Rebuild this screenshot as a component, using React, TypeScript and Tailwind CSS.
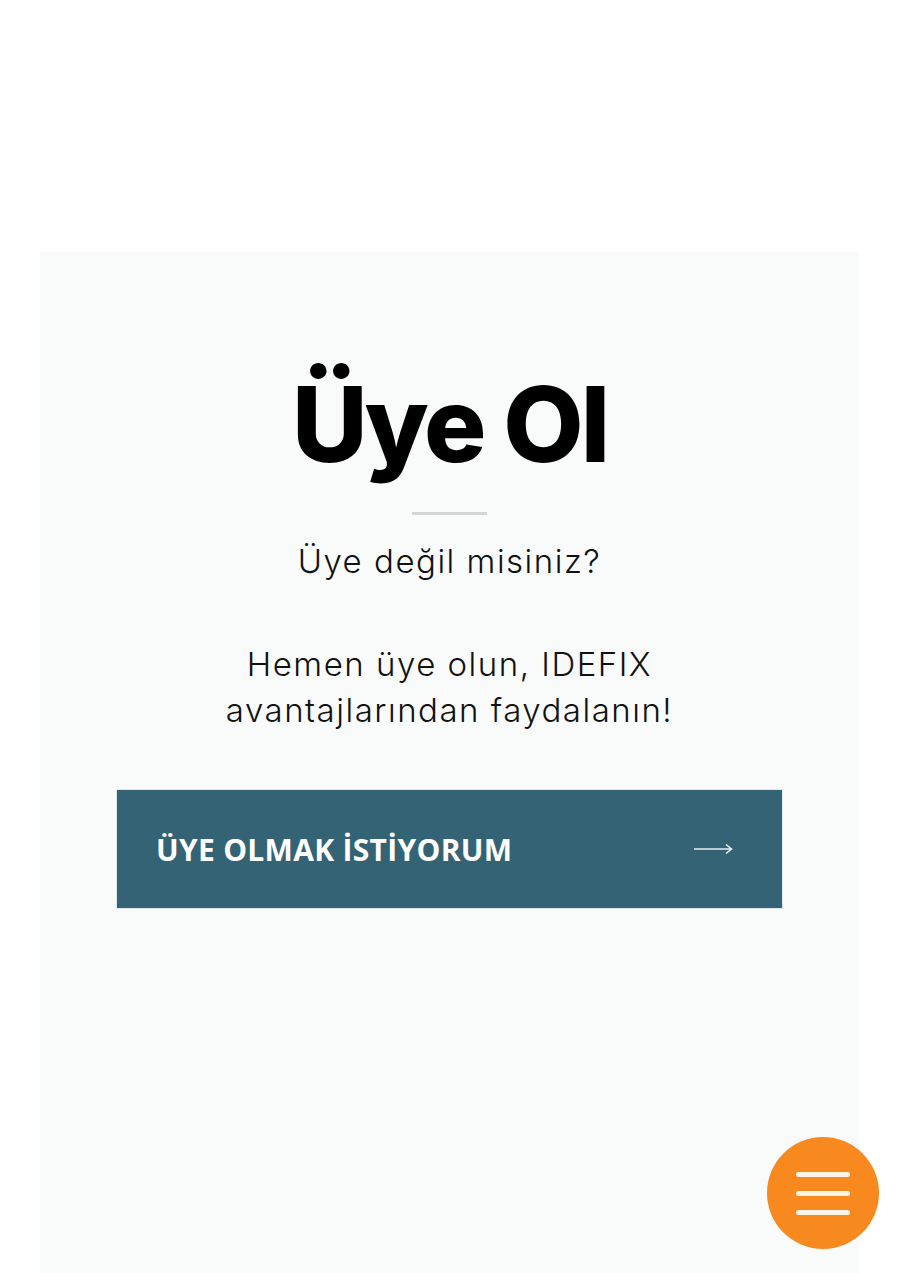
import React from "react";

export default function App() {
  return (
    <div className="relative w-[899px] h-[1273px] bg-white overflow-hidden">
      <div className="pt-[252px] px-[40px] h-full">
        <div className="bg-[#f9fafa] h-full flex flex-col items-center pt-[112px]">
          <h1 className="font-['Inter',sans-serif] text-[104px] leading-[120px] font-extrabold text-black tracking-[-3px]">
            Üye Ol
          </h1>
          <div className="mt-[28px] w-[75px] h-[3px] bg-[#d4d6d6]" />
          <div className="mt-[23px] text-center font-['Inter',sans-serif] font-light text-[33px] leading-[46px] tracking-[1.5px] text-[#111]">
            <p>Üye değil misiniz?</p>
            <p className="mt-[57px]">Hemen üye olun, IDEFIX</p>
            <p>avantajlarından faydalanın!</p>
          </div>
          <button className="mt-[56px] w-[667px] h-[120px] bg-[#336374] border border-[#dde8ea] flex items-center justify-between pl-[39px] pr-[49px] font-['Open_Sans',sans-serif]">
            <span className="text-white font-bold text-[30px] tracking-[0.3px]">ÜYE OLMAK İSTİYORUM</span>
            <svg width="40" height="12" viewBox="0 0 40 12" fill="none">
              <path d="M1 6H38M33 1.5L38.5 6L33 10.5" stroke="#e6eef0" strokeWidth="1.6" />
            </svg>
          </button>
        </div>
      </div>
      <button className="absolute left-[767px] top-[1137px] w-[112px] h-[112px] rounded-full bg-[#f7891f] flex flex-col items-center justify-center gap-[14px]">
        <span className="block w-[54px] h-[5px] rounded-full bg-[#fff4e6]" />
        <span className="block w-[54px] h-[5px] rounded-full bg-[#fff4e6]" />
        <span className="block w-[54px] h-[5px] rounded-full bg-[#fff4e6]" />
      </button>
    </div>
  );
}
